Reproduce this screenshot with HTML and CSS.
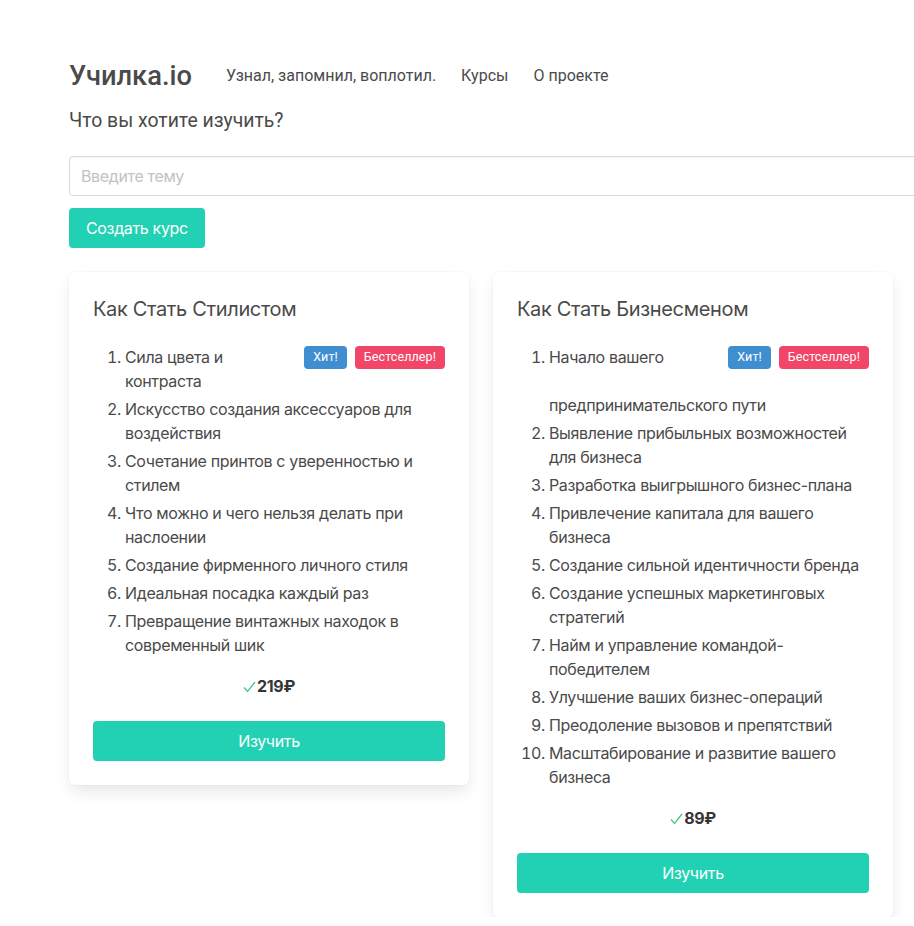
FILE: index.html
```html
<!DOCTYPE html>
<html lang="ru">
<head>
<meta charset="utf-8">
<title>Училка.io</title>
<link rel="stylesheet" href="styles.css">
</head>
<body>
<div class="page">
  <header class="topbar">
    <span class="logo">Училка.io</span>
    <span class="nav-item">Узнал, запомнил, воплотил.</span>
    <span class="nav-item">Курсы</span>
    <span class="nav-item">О проекте</span>
  </header>
  <p class="question">Что вы хотите изучить?</p>
  <input class="topic-input" type="text" placeholder="Введите тему">
  <button class="btn create-btn">Создать курс</button>

  <div class="cards">
    <div class="card">
      <h2 class="card-title">Как Стать Стилистом</h2>
      <ol class="lessons">
        <li><span class="tags"><span class="tag tag-info">Хит!</span><span class="tag tag-danger">Бестселлер!</span></span>Сила цвета и контраста</li>
        <li>Искусство создания аксессуаров для воздействия</li>
        <li>Сочетание принтов с уверенностью и стилем</li>
        <li>Что можно и чего нельзя делать при наслоении</li>
        <li>Создание фирменного личного стиля</li>
        <li>Идеальная посадка каждый раз</li>
        <li>Превращение винтажных находок в современный шик</li>
      </ol>
      <div class="price"><svg class="check" width="13" height="12" viewBox="0 0 13 12"><path d="M1 6.5 L4.5 10.5 L12 1" fill="none" stroke="#48c78e" stroke-width="1.3"/></svg><b>219₽</b></div>
      <button class="btn study-btn">Изучить</button>
    </div>

    <div class="card">
      <h2 class="card-title">Как Стать Бизнесменом</h2>
      <ol class="lessons">
        <li><span class="tags"><span class="tag tag-info">Хит!</span><span class="tag tag-danger">Бестселлер!</span></span>Начало вашего предпринимательского пути</li>
        <li>Выявление прибыльных возможностей для бизнеса</li>
        <li>Разработка выигрышного бизнес-плана</li>
        <li>Привлечение капитала для вашего бизнеса</li>
        <li>Создание сильной идентичности бренда</li>
        <li>Создание успешных маркетинговых стратегий</li>
        <li>Найм и управление командой-победителем</li>
        <li>Улучшение ваших бизнес-операций</li>
        <li>Преодоление вызовов и препятствий</li>
        <li>Масштабирование и развитие вашего бизнеса</li>
      </ol>
      <div class="price"><svg class="check" width="13" height="12" viewBox="0 0 13 12"><path d="M1 6.5 L4.5 10.5 L12 1" fill="none" stroke="#48c78e" stroke-width="1.3"/></svg><b>89₽</b></div>
      <button class="btn study-btn">Изучить</button>
    </div>
  </div>
</div>
</body>
</html>
```

FILE: styles.css
```css
html, body {
  margin: 0;
  padding: 0;
  background: #fff;
  overflow: hidden;
}
body {
  font-family: Inter, "Noto Sans", sans-serif;
  color: #4a4a4a;
  font-size: 16px;
  letter-spacing: -0.35px;
}
.page {
  padding: 58px 0 0 69px;
  width: 900px;
}
.topbar {
  display: flex;
  align-items: center;
  gap: 25px;
  font-family: Roboto, sans-serif;
  letter-spacing: 0;
}
.logo {
  font-size: 27.3px;
  font-weight: 500;
  color: #4a4a4a;
  line-height: 36px;
  margin-right: 9px;
}
.nav-item {
  font-size: 16px;
  color: #4a4a4a;
  position: relative;
  top: -1px;
}
.question {
  font-family: Roboto, sans-serif;
  letter-spacing: 0;
  font-size: 19.4px;
  margin: 14px 0 0;
  line-height: 26px;
  color: #4a4a4a;
}
.topic-input {
  display: block;
  box-sizing: border-box;
  width: 870px;
  height: 40px;
  margin-top: 22px;
  border: 1px solid #dbdbdb;
  border-radius: 4px;
  padding: 0 11px;
  font-family: Inter, sans-serif;
  font-size: 16px;
  letter-spacing: -0.35px;
  color: #363636;
  box-shadow: inset 0 1px 2px rgba(10,10,10,0.05);
}
.topic-input::placeholder {
  color: #c2c2c2;
}
.btn {
  display: block;
  border: none;
  background: #22d1b3;
  color: #fff;
  font-family: Inter, sans-serif;
  font-size: 16px;
  letter-spacing: -0.35px;
  height: 40px;
  border-radius: 4px;
  cursor: pointer;
}
.create-btn {
  margin-top: 12px;
  padding: 0 17px;
}
.cards {
  display: flex;
  align-items: flex-start;
  gap: 24px;
  margin-top: 24px;
}
.card {
  width: 400px;
  box-sizing: border-box;
  padding: 24px;
  background: #fff;
  border-radius: 6px;
  box-shadow: 0 0.5em 1em -0.125em rgba(10,10,10,0.1), 0 0 0 1px rgba(10,10,10,0.02);
}
.card-title {
  margin: 0;
  font-size: 20px;
  font-weight: 400;
  line-height: 26px;
  color: #4a4a4a;
}
.lessons {
  margin: 23px 0 0;
  padding-left: 32px;
  line-height: 24px;
}
.lessons li + li {
  margin-top: 4px;
}
.tags {
  float: right;
  display: flex;
  gap: 8px;
  height: 48px;
  margin-left: 8px;
  padding-top: 1px;
  box-sizing: border-box;
}
.tag {
  display: inline-flex;
  align-items: center;
  height: 23px;
  padding: 0 9px;
  border-radius: 4px;
  font-family: Roboto, sans-serif;
  font-size: 12.5px;
  letter-spacing: 0.1px;
  color: #fff;
  line-height: 1;
}
.tag-info { background: #3e8ed0; }
.tag-danger { background: #f14668; }
.price {
  display: flex;
  justify-content: center;
  align-items: center;
  margin-top: 17px;
  height: 24px;
  font-size: 16px;
  color: #363636;
}
.price b { font-weight: 700; }
.check { margin-right: 1px; margin-top: 2px; }
.study-btn {
  width: 100%;
  margin-top: 23px;
}
```
